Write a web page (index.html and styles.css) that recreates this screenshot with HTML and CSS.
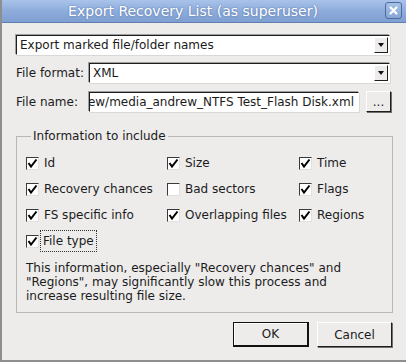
FILE: index.html
```html
<!DOCTYPE html>
<html>
<head>
  <meta charset="UTF-8" />
  <title>Export Recovery List</title>
  <link rel="stylesheet" href="styles.css">
</head>
<body>
  <div class="window">
    <div class="titlebar">
      <span class="title">Export Recovery List (as superuser)</span>
      <span class="close-btn">
        <svg width="11" height="11" viewBox="0 0 11 11"><path d="M2.5 2.5 L8.5 8.5 M8.5 2.5 L2.5 8.5" stroke="#fff" stroke-width="2.2" stroke-linecap="round"/></svg>
      </span>
    </div>

    <div class="content">
      <div class="combo">
        <span class="combo-text">Export marked file/folder names</span>
        <span class="combo-arrow"></span>
      </div>

      <div class="row">
        <label class="row-label">File format:</label>
        <div class="combo">
          <span class="combo-text">XML</span>
          <span class="combo-arrow"></span>
        </div>
      </div>

      <div class="row">
        <label class="row-label">File name:</label>
        <div class="text-input"><span class="scrolled">ew/media_andrew_NTFS Test_Flash Disk.xml</span></div>
        <button class="btn browse">...</button>
      </div>

      <fieldset class="group">
        <legend>Information to include</legend>
        <div class="options">
          <label class="opt"><span class="box"><svg class="tick" viewBox="0 0 11 11"><path d="M1.5 5 L4 8.5 L9.5 1.5"/></svg></span>Id</label>
          <label class="opt"><span class="box"><svg class="tick" viewBox="0 0 11 11"><path d="M1.5 5 L4 8.5 L9.5 1.5"/></svg></span>Size</label>
          <label class="opt"><span class="box"><svg class="tick" viewBox="0 0 11 11"><path d="M1.5 5 L4 8.5 L9.5 1.5"/></svg></span>Time</label>
          <label class="opt"><span class="box"><svg class="tick" viewBox="0 0 11 11"><path d="M1.5 5 L4 8.5 L9.5 1.5"/></svg></span>Recovery chances</label>
          <label class="opt"><span class="box"></span>Bad sectors</label>
          <label class="opt"><span class="box"><svg class="tick" viewBox="0 0 11 11"><path d="M1.5 5 L4 8.5 L9.5 1.5"/></svg></span>Flags</label>
          <label class="opt"><span class="box"><svg class="tick" viewBox="0 0 11 11"><path d="M1.5 5 L4 8.5 L9.5 1.5"/></svg></span>FS specific info</label>
          <label class="opt"><span class="box"><svg class="tick" viewBox="0 0 11 11"><path d="M1.5 5 L4 8.5 L9.5 1.5"/></svg></span>Overlapping files</label>
          <label class="opt"><span class="box"><svg class="tick" viewBox="0 0 11 11"><path d="M1.5 5 L4 8.5 L9.5 1.5"/></svg></span>Regions</label>
          <label class="opt"><span class="box"><svg class="tick" viewBox="0 0 11 11"><path d="M1.5 5 L4 8.5 L9.5 1.5"/></svg></span><span class="focus">File type</span></label>
        </div>
        <p class="note">This information, especially "Recovery chances" and<br>"Regions", may significantly slow this process and<br>increase resulting file size.</p>
      </fieldset>

      <div class="actions">
        <button class="btn default">OK</button>
        <button class="btn">Cancel</button>
      </div>
    </div>
  </div>
</body>
</html>
```

FILE: styles.css
```css
body {
  margin: 0;
  font-family: "DejaVu Sans", sans-serif;
  font-size: 12px;
  color: #1b1b1b;
}

.window {
  width: 406px;
  height: 362px;
  box-sizing: border-box;
  background: #edeceb;
  border-left: 2px solid #8e8e8e;
  border-bottom: 2px solid #8e8e8e;
  overflow: hidden;
}

.titlebar {
  height: 22px;
  margin-left: -2px;
  display: flex;
  align-items: center;
  justify-content: center;
  position: relative;
  background: linear-gradient(#a9c3ea, #8eacdb 50%, #7f9fd2);
  border-bottom: 1px solid #5f7fb0;
}

.title {
  color: #fff;
  font-size: 14px;
  text-shadow: 0 0 2px #4b6aa0;
  margin-left: -20px;
}

.close-btn {
  position: absolute;
  right: 4px;
  top: 2px;
  width: 15px;
  height: 15px;
  border: 1px solid #4d6a99;
  border-radius: 3px;
  background: linear-gradient(#a7c0e6, #87a6d6);
  display: flex;
  align-items: center;
  justify-content: center;
}

.content {
  padding: 12px 14px 0 14px;
}

.combo,
.text-input {
  height: 20px;
  box-sizing: border-box;
  background: #fff;
  border: 1px solid;
  border-color: #1e1e1e #fff #fff #1e1e1e;
  box-shadow: -1px -1px 0 #a0a0a0, 1px 1px 0 #d8d8d8;
  display: flex;
  align-items: center;
  overflow: hidden;
}

.combo {
  flex: 1;
  margin-right: 2px;
}

.combo-text {
  flex: 1;
  padding-left: 3px;
  white-space: nowrap;
}

.combo-arrow {
  width: 14px;
  height: 16px;
  margin-right: 1px;
  background: #edeceb;
  border: 1px solid;
  border-color: #fff #1e1e1e #1e1e1e #fff;
  box-sizing: border-box;
  position: relative;
}

.combo-arrow::after {
  content: "";
  position: absolute;
  left: 3px;
  top: 5px;
  border-left: 3.5px solid transparent;
  border-right: 3.5px solid transparent;
  border-top: 4px solid #111;
}

.row {
  display: flex;
  align-items: center;
  margin-top: 8px;
}

.row-label {
  width: 73px;
  flex-shrink: 0;
  white-space: nowrap;
}

.text-input {
  width: 270px;
  flex-shrink: 0;
  justify-content: flex-end;
  padding-right: 4px;
}

.scrolled {
  white-space: nowrap;
}

.btn {
  font-family: inherit;
  font-size: 12px;
  color: #1b1b1b;
  background: #edeceb;
  border: 1px solid;
  border-color: #fff #1e1e1e #1e1e1e #fff;
  box-shadow: 1px 1px 0 #6f6f6f;
  padding: 0;
  height: 21px;
}

.browse {
  width: 25px;
  margin-left: 7px;
  line-height: 10px;
}

.group {
  margin: 17px 0 0 0;
  padding: 0 9px 9px 9px;
  border: 1px solid #b9b8b7;
  width: 377px;
  box-sizing: border-box;
}

.group legend {
  padding: 0 2px;
  margin-left: 5px;
}

.options {
  display: grid;
  grid-template-columns: 141px 132px auto;
  grid-auto-rows: 26px;
  margin-top: 7px;
}

.opt {
  display: flex;
  align-items: center;
}

.box {
  width: 13px;
  height: 13px;
  flex-shrink: 0;
  box-sizing: border-box;
  background: #fff;
  border: 1px solid;
  border-color: #3a3a3a #e0e0e0 #e0e0e0 #3a3a3a;
  margin-right: 5px;
  display: flex;
}

.tick {
  width: 11px;
  height: 11px;
  fill: none;
  stroke: #000;
  stroke-width: 2;
}

.focus {
  outline: 1px dotted #333;
  padding: 3px 2px;
  margin-left: -3px;
}

.note {
  margin: 7px 0 0 0;
  line-height: 14px;
}

.actions {
  display: flex;
  justify-content: flex-end;
  gap: 8px;
  margin-top: 9px;
}

.actions .btn {
  height: 25px;
  width: 75px;
}

.actions .default {
  width: 76px;
  border: 1px solid #111;
  border-right-width: 2px;
  border-bottom-width: 2px;
  box-shadow: inset 1px 1px 0 #fff;
}
```
